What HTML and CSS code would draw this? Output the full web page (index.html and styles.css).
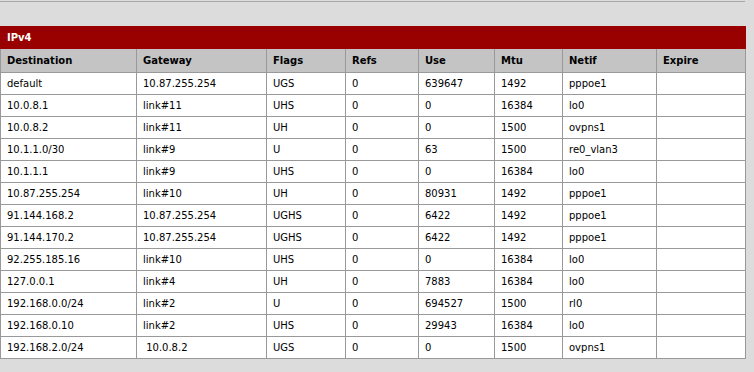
FILE: index.html
```html
<!DOCTYPE html>
<html>
<head>
<meta charset="utf-8">
<link rel="stylesheet" href="styles.css">
</head>
<body>
<div class="page">
  <div class="topline"></div>
  <table class="routes">
    <colgroup>
      <col class="c1"><col class="c2"><col class="c3"><col class="c4"><col class="c5"><col class="c6"><col class="c7"><col class="c8">
    </colgroup>
    <thead>
      <tr class="title"><th colspan="8">IPv4</th></tr>
      <tr class="head">
        <th>Destination</th><th>Gateway</th><th>Flags</th><th>Refs</th><th>Use</th><th>Mtu</th><th>Netif</th><th>Expire</th>
      </tr>
    </thead>
    <tbody>
      <tr><td>default</td><td>10.87.255.254</td><td>UGS</td><td>0</td><td>639647</td><td>1492</td><td>pppoe1</td><td></td></tr>
      <tr><td>10.0.8.1</td><td>link#11</td><td>UHS</td><td>0</td><td>0</td><td>16384</td><td>lo0</td><td></td></tr>
      <tr><td>10.0.8.2</td><td>link#11</td><td>UH</td><td>0</td><td>0</td><td>1500</td><td>ovpns1</td><td></td></tr>
      <tr><td>10.1.1.0/30</td><td>link#9</td><td>U</td><td>0</td><td>63</td><td>1500</td><td>re0_vlan3</td><td></td></tr>
      <tr><td>10.1.1.1</td><td>link#9</td><td>UHS</td><td>0</td><td>0</td><td>16384</td><td>lo0</td><td></td></tr>
      <tr><td>10.87.255.254</td><td>link#10</td><td>UH</td><td>0</td><td>80931</td><td>1492</td><td>pppoe1</td><td></td></tr>
      <tr><td>91.144.168.2</td><td>10.87.255.254</td><td>UGHS</td><td>0</td><td>6422</td><td>1492</td><td>pppoe1</td><td></td></tr>
      <tr><td>91.144.170.2</td><td>10.87.255.254</td><td>UGHS</td><td>0</td><td>6422</td><td>1492</td><td>pppoe1</td><td></td></tr>
      <tr><td>92.255.185.16</td><td>link#10</td><td>UHS</td><td>0</td><td>0</td><td>16384</td><td>lo0</td><td></td></tr>
      <tr><td>127.0.0.1</td><td>link#4</td><td>UH</td><td>0</td><td>7883</td><td>16384</td><td>lo0</td><td></td></tr>
      <tr><td>192.168.0.0/24</td><td>link#2</td><td>U</td><td>0</td><td>694527</td><td>1500</td><td>rl0</td><td></td></tr>
      <tr><td>192.168.0.10</td><td>link#2</td><td>UHS</td><td>0</td><td>29943</td><td>16384</td><td>lo0</td><td></td></tr>
      <tr><td>192.168.2.0/24</td><td>&nbsp;10.0.8.2</td><td>UGS</td><td>0</td><td>0</td><td>1500</td><td>ovpns1</td><td></td></tr>
    </tbody>
  </table>
</div>
</body>
</html>
```
FILE: styles.css
```css
html, body {
  margin: 0;
  padding: 0;
  background: #dcdcdc;
}
.page {
  width: 754px;
  height: 372px;
  font-family: "DejaVu Sans", Verdana, sans-serif;
  font-size: 10px;
  color: #000;
}
.topline {
  width: 745px;
  height: 1px;
  margin-top: 1px;
  background: #a8a8a8;
}
.routes {
  margin-top: 24px;
  width: 746px;
  table-layout: fixed;
  border-collapse: collapse;
  border: 1px solid #999;
}
.c1 { width: 136px; }
.c2 { width: 130px; }
.c3 { width: 79px; }
.c4 { width: 73px; }
.c5 { width: 76px; }
.c6 { width: 68px; }
.c7 { width: 94px; }
.c8 { width: 89px; }
.routes th, .routes td {
  border: 1px solid #999;
  text-align: left;
  padding: 0 6px;
  white-space: nowrap;
  overflow: hidden;
}
.title th {
  background: #990000;
  color: #fff;
  border: 1px solid #990000;
  height: 21px;
  font-weight: bold;
}
.head th {
  background: #c4c4c4;
  height: 23px;
  font-weight: bold;
}
.routes td {
  background: #fff;
  height: 21px;
}
```
